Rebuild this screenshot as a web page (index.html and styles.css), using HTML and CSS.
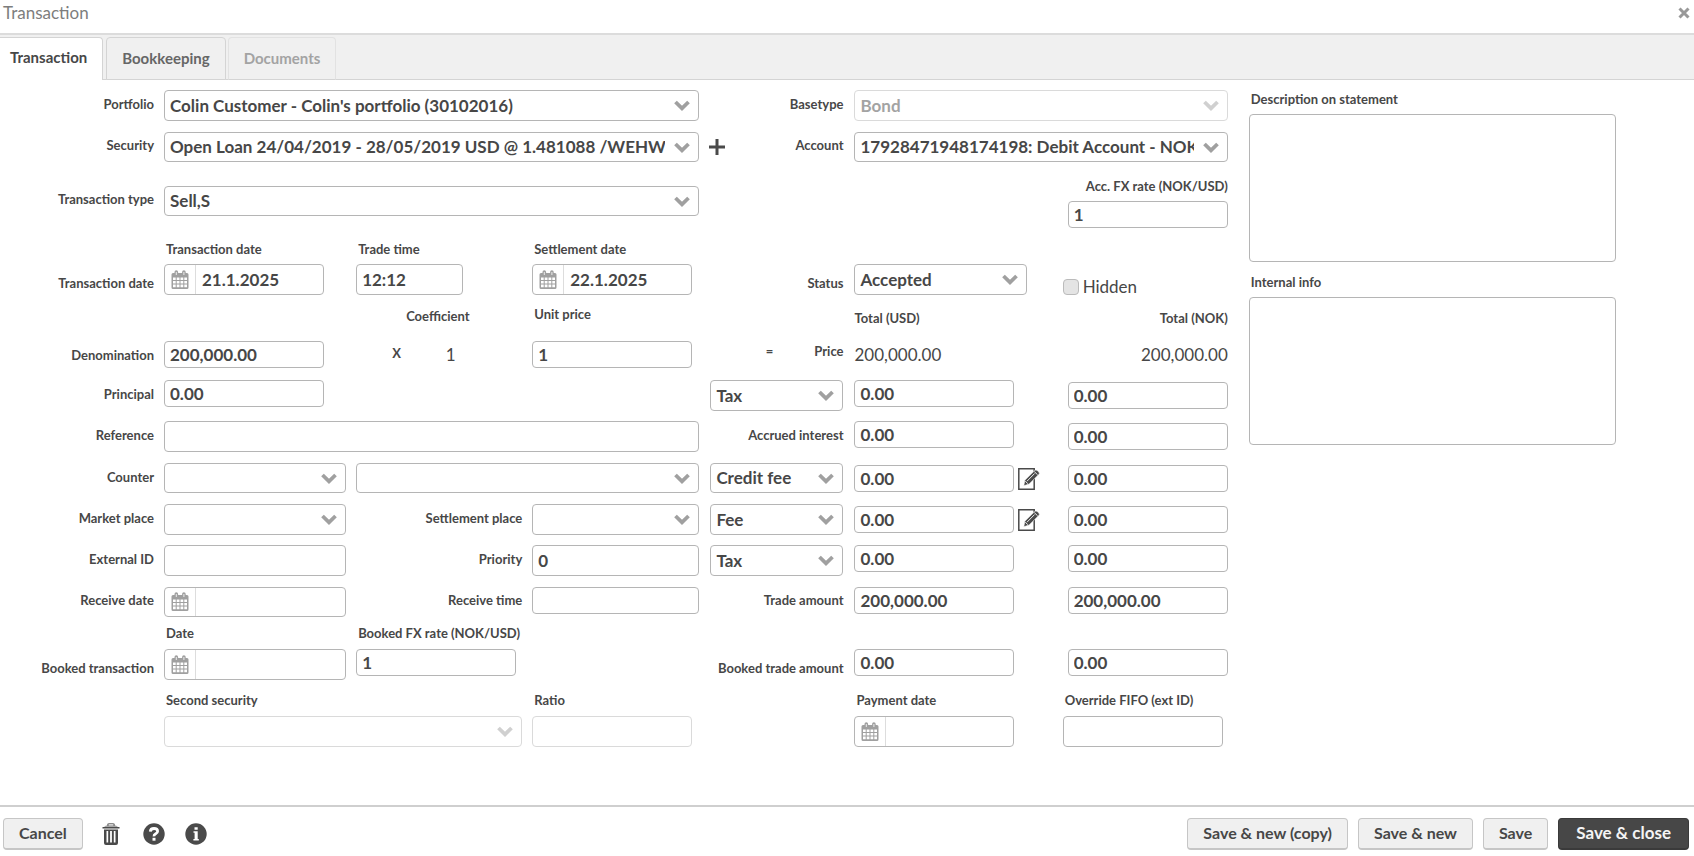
FILE: index.html
```html
<!DOCTYPE html>
<html lang="en">
<head>
<meta charset="utf-8">
<title>Transaction</title>
<link rel="stylesheet" href="styles.css">
</head>
<body>
<svg class="defs" aria-hidden="true">
  <symbol id="i-cal" viewBox="0 0 18 20">
    <path fill="#a0a0a0" fill-rule="evenodd" d="M2 3h1.500v-1a1.800 1.800 0 0 1 3.600 0v1h4v-1a1.800 1.800 0 0 1 3.600 0v1H16a1.500 1.500 0 0 1 1.500 1.500v13A1.500 1.500 0 0 1 16 19H2a1.500 1.500 0 0 1-1.500-1.500v-13A1.500 1.500 0 0 1 2 3zM2 7.500v2.500h2.700V7.500zm3.700 0v2.500h2.800V7.500zm3.800 0v2.500h2.800V7.500zm3.800 0v2.500H16V7.500zM2 11v2.500h2.700V11zm3.700 0v2.500h2.800V11zm3.800 0v2.500h2.800V11zm3.800 0v2.500H16V11zM2 14.500v2.700h2.700v-2.700zm3.700 0v2.700h2.800v-2.700zm3.800 0v2.700h2.800v-2.700zm3.800 0v2.700H16v-2.700z"/>
    <path stroke="#fff" stroke-width=".8" d="M5.300 2v3M12.900 2v3"/>
  </symbol>
  <symbol id="i-edit" viewBox="0 0 22 22">
    <path fill="none" stroke="#4a4a4a" stroke-width="1.500" d="M.8.800h15.400v20.400H.8z"/>
    <path fill="#4a4a4a" stroke="#fff" stroke-width=".6" d="M5.800 17.800l1-5.500L16.700 2.500a1.800 1.800 0 0 1 2.500 0l1.600 1.400a1.800 1.800 0 0 1 0 2.500L11.200 16z"/>
    <path stroke="#fff" stroke-width=".9" d="M9 13.200L16.600 5.500M16.300 3.600l3.300 3.200M7.300 13.300l2.500 2.300"/>
  </symbol>
</svg>

<header class="titlebar">
  <h1>Transaction</h1>
  <button class="close" type="button" aria-label="Close"><svg width="12" height="12" viewBox="0 0 12 12"><path stroke="#999" stroke-width="3" d="M1.500 1.500l9 9M10.500 1.500l-9 9"/></svg></button>
</header>

<nav class="tabs" role="tablist">
  <button class="tab active" type="button" role="tab" aria-selected="true">Transaction</button>
  <button class="tab" type="button" role="tab">Bookkeeping</button>
  <button class="tab" type="button" role="tab" disabled>Documents</button>
</nav>

<main class="body">
  <form class="form" id="tx">
    <label class="lab r1 c1" for="portfolio">Portfolio</label>
    <select class="ctl r1 c2-4" id="portfolio"><option>Colin Customer - Colin's portfolio (30102016)</option></select>
    <label class="lab r1 c5" for="basetype">Basetype</label>
    <select class="ctl r1 c6-7" id="basetype" disabled><option>Bond</option></select>

    <label class="lab high r2 c1" for="security">Security</label>
    <select class="ctl mid r2 c2-4" id="security"><option>Open Loan 24/04/2019 - 28/05/2019 USD @ 1.481088 /WEHW</option></select>
    <div class="addlab r2 c5">
      <button class="icon" type="button" aria-label="Add security"><svg width="16" height="16" viewBox="0 0 16 16"><path stroke="#4a4a4a" stroke-width="3" d="M8 0v16M0 8h16"/></svg></button>
      <label class="lab high" for="account">Account</label>
    </div>
    <select class="ctl mid r2 c6-7" id="account"><option>17928471948174198: Debit Account - NOK</option></select>

    <label class="lab type r3 c1" for="type">Transaction type</label>
    <select class="ctl mid type r3 c2-4" id="type"><option>Sell,S</option></select>
    <div class="stack r3 c7">
      <label class="cap end" for="accfx">Acc. FX rate (NOK/USD)</label>
      <input class="ctl low" id="accfx" value="1">
    </div>

    <label class="cap r4 c2" for="tdate">Transaction date</label>
    <label class="cap r4 c3" for="ttime">Trade time</label>
    <label class="cap r4 c4" for="sdate">Settlement date</label>

    <span class="lab deep r5 c1">Transaction date</span>
    <div class="ctl date std r5 c2"><button class="cal" type="button" aria-label="Pick transaction date"><svg width="18" height="20"><use href="#i-cal"/></svg></button><input id="tdate" value="21.1.2025"></div>
    <input class="ctl time r5 c3" id="ttime" value="12:12">
    <div class="ctl date std r5 c4"><button class="cal" type="button" aria-label="Pick settlement date"><svg width="18" height="20"><use href="#i-cal"/></svg></button><input id="sdate" value="22.1.2025"></div>
    <label class="lab deep r5 c5" for="status">Status</label>
    <select class="ctl status r5 c6" id="status"><option>Accepted</option></select>
    <label class="check r5 c7"><input type="checkbox">Hidden</label>

    <span class="cap coef r6 c3">Coefficient</span>
    <label class="cap r6 c4" for="unit">Unit price</label>
    <span class="cap total r6 c6">Total (USD)</span>
    <span class="cap total end r6 c7">Total (NOK)</span>

    <label class="lab r7 c1" for="denom">Denomination</label>
    <input class="ctl low std r7 c2" id="denom" value="200,000.00">
    <div class="times r7 c3"><span class="sign">X</span><span class="val">1</span></div>
    <input class="ctl low std r7 c4" id="unit" value="1">
    <div class="equals r7 c5"><span class="sign">=</span><span class="sign">Price</span></div>
    <span class="val r7 c6">200,000.00</span>
    <span class="val end r7 c7">200,000.00</span>

    <label class="lab r8 c1" for="principal">Principal</label>
    <input class="ctl low std r8 c2" id="principal" value="0.00">
    <select class="ctl r8 c5" aria-label="First tax type"><option>Tax</option></select>
    <input class="ctl low std r8 c6" aria-label="First tax USD" value="0.00">
    <input class="ctl low drop r8 c7" aria-label="First tax NOK" value="0.00">

    <label class="lab r9 c1" for="ref">Reference</label>
    <input class="ctl r9 c2-4" id="ref">
    <label class="lab r9 c5" for="accrued">Accrued interest</label>
    <input class="ctl low std r9 c6" id="accrued" value="0.00">
    <input class="ctl low drop r9 c7" aria-label="Accrued interest NOK" value="0.00">

    <label class="lab r10 c1" for="counter">Counter</label>
    <select class="ctl mid r10 c2" id="counter"><option></option></select>
    <select class="ctl mid r10 c3-4" aria-label="Counter name"><option></option></select>
    <select class="ctl mid r10 c5" aria-label="Credit fee type"><option>Credit fee</option></select>
    <div class="withicon r10 c6"><input class="ctl low std" aria-label="Credit fee USD" value="0.00"><button class="icon" type="button" aria-label="Edit credit fee"><svg width="22" height="22"><use href="#i-edit"/></svg></button></div>
    <input class="ctl low drop r10 c7" aria-label="Credit fee NOK" value="0.00">

    <label class="lab r11 c1" for="market">Market place</label>
    <select class="ctl r11 c2" id="market"><option></option></select>
    <label class="lab r11 c3" for="splace">Settlement place</label>
    <select class="ctl r11 c4" id="splace"><option></option></select>
    <select class="ctl r11 c5" aria-label="Fee type"><option>Fee</option></select>
    <div class="withicon r11 c6"><input class="ctl low std" aria-label="Fee USD" value="0.00"><button class="icon" type="button" aria-label="Edit fee"><svg width="22" height="22"><use href="#i-edit"/></svg></button></div>
    <input class="ctl low drop r11 c7" aria-label="Fee NOK" value="0.00">

    <label class="lab r12 c1" for="ext">External ID</label>
    <input class="ctl r12 c2" id="ext">
    <label class="lab r12 c3" for="prio">Priority</label>
    <input class="ctl r12 c4" id="prio" value="0">
    <select class="ctl r12 c5" aria-label="Second tax type"><option>Tax</option></select>
    <input class="ctl low std r12 c6" aria-label="Second tax USD" value="0.00">
    <input class="ctl low r12 c7" aria-label="Second tax NOK" value="0.00">

    <label class="lab high r13 c1" for="rdate">Receive date</label>
    <div class="ctl date mid r13 c2"><button class="cal" type="button" aria-label="Pick receive date"><svg width="18" height="20"><use href="#i-cal"/></svg></button><input id="rdate"></div>
    <label class="lab high r13 c3" for="rtime">Receive time</label>
    <input class="ctl low r13 c4" id="rtime">
    <label class="lab high r13 c5" for="trade">Trade amount</label>
    <input class="ctl low std r13 c6" id="trade" value="200,000.00">
    <input class="ctl low r13 c7" aria-label="Trade amount NOK" value="200,000.00">

    <label class="cap r14 c2" for="bdate">Date</label>
    <label class="cap r14 c3" for="bfx">Booked FX rate (NOK/USD)</label>

    <span class="lab deep r15 c1">Booked transaction</span>
    <div class="ctl date r15 c2"><button class="cal" type="button" aria-label="Pick booked date"><svg width="18" height="20"><use href="#i-cal"/></svg></button><input id="bdate"></div>
    <input class="ctl low std r15 c3" id="bfx" value="1">
    <label class="lab deep r15 c5" for="bamount">Booked trade amount</label>
    <input class="ctl low std r15 c6" id="bamount" value="0.00">
    <input class="ctl low r15 c7" aria-label="Booked trade amount NOK" value="0.00">

    <label class="cap r16 c2" for="second">Second security</label>
    <label class="cap r16 c4" for="ratio">Ratio</label>
    <label class="cap r16 c6" for="pdate">Payment date</label>
    <label class="cap out r16 c7" for="fifo">Override FIFO (ext ID)</label>

    <select class="ctl r17 c2-3" id="second" disabled><option></option></select>
    <input class="ctl std r17 c4" id="ratio" disabled>
    <div class="ctl date std r17 c6"><button class="cal" type="button" aria-label="Pick payment date"><svg width="18" height="20"><use href="#i-cal"/></svg></button><input id="pdate"></div>
    <input class="ctl out r17 c7" id="fifo">
  </form>

  <aside class="notes">
    <label class="cap" for="desc">Description on statement</label>
    <textarea id="desc"></textarea>
    <label class="cap" for="info">Internal info</label>
    <textarea id="info"></textarea>
  </aside>
</main>

<footer class="footer">
  <button class="btn" type="button">Cancel</button>
  <div class="tools">
    <button class="icon" type="button" aria-label="Delete"><svg width="24" height="22" viewBox="-3 0 24 22"><path fill="#8a8a8a" d="M2 3.800Q4 2.600 5 2.500V1.500Q5.300 0 7 0h4q1.700 0 2 1.500v1q1 .1 3 1.300z"/><path fill="#fff" d="M6.800 1.400h4.400v1H6.800z"/><path fill="#4a4a4a" fill-rule="evenodd" d="M.5 4h17v1.500H.5zM2 6.500h14V20q0 2-2 2H4q-2 0-2-2zM4.500 8v11.500h1.700V8zm3.600 0v11.500h1.800V8zm3.700 0v11.500h1.700V8z"/></svg></button>
    <button class="icon" type="button" aria-label="Help"><svg width="22" height="22" viewBox="0 0 22 22"><circle cx="11" cy="11" r="10.700" fill="#4a4a4a"/><path fill="none" stroke="#fff" stroke-width="2.800" d="M7.300 8.600Q7.500 5.500 11 5.500T14.600 8.300Q14.600 9.800 12.700 10.800T11 13.400"/><path fill="#fff" d="M9.500 14.800h3v2.900h-3z"/></svg></button>
    <button class="icon" type="button" aria-label="Information"><svg width="22" height="22" viewBox="0 0 22 22"><circle cx="11" cy="11" r="10.700" fill="#4a4a4a"/><path fill="#fff" d="M9.500 4.200h3.200v2.600H9.500zM8.500 8.300h4.200v7.700h1.100v1.500H8.400V16h1.200V9.800H8.500z"/></svg></button>
  </div>
  <div class="saves">
    <button class="btn" type="button">Save &amp; new (copy)</button>
    <button class="btn" type="button">Save &amp; new</button>
    <button class="btn" type="button">Save</button>
    <button class="btn primary" type="submit" form="tx">Save &amp; close</button>
  </div>
</footer>
</body>
</html>
```
FILE: styles.css
```css
* { box-sizing: border-box; }

body {
  margin: 0;
  min-height: 100vh;
  display: flex;
  flex-direction: column;
  background: #fff;
  color: #474747;
  font: 17px/20px Lato, "Open Sans", sans-serif;
}

button, input, select, textarea { font: inherit; color: inherit; margin: 0; }
button { cursor: pointer; }
.defs { display: none; }

.titlebar {
  display: flex;
  justify-content: space-between;
  padding: 3px 4px 10px 3px;
  border-bottom: 2px solid #dcdcdc;
}
.titlebar h1 { margin: 0; font-size: 17px; font-weight: 400; color: #7d7d7d; }
.close, .icon { display: flex; padding: 0; border: 0; background: none; }
.close { align-items: center; }

.tabs {
  display: flex;
  align-items: flex-end;
  background: #f0f0f0;
  padding-top: 2px;
  box-shadow: inset 0 -1px #d4d4d4;
}
.tab {
  padding: 11px 15px 12px;
  margin-right: 2px;
  border: 1px solid #d4d4d4;
  border-radius: 4px 4px 0 0;
  background: #f0f0f0;
  color: #666;
  font-size: 15px;
  line-height: 18px;
  font-weight: 700;
}
.tab:disabled { color: #a3a3a3; border-color: #e2e2e2 #e2e2e2 #d4d4d4; }
.tab.active {
  padding: 10px 15px 14px 10px;
  margin-right: 3px;
  border-width: 1px 1px 0 0;
  border-radius: 0 4px 0 0;
  background: #fff;
  color: #474747;
}

.body {
  flex: 1;
  display: flex;
  align-items: flex-start;
  gap: 21px;
  padding: 10px 78px 24px 0;
}

.form {
  flex: 1227 1 0;
  display: grid;
  column-gap: 10px;
  align-items: start;
  grid-template-columns: 154px
    minmax(0, 182fr) minmax(0, 166fr) minmax(0, 167fr)
    minmax(0, 135fr) minmax(0, 203fr) minmax(0, 160fr);
  grid-template-rows:
    minmax(42px, auto) minmax(46px, auto) minmax(63px, auto)
    minmax(23px, auto) minmax(42px, auto) minmax(35px, auto)
    minmax(39px, auto) minmax(41px, auto) minmax(42px, auto)
    minmax(41px, auto) minmax(41px, auto) minmax(42px, auto)
    minmax(38px, auto) minmax(24px, auto) minmax(43px, auto)
    minmax(24px, auto) auto;
}

.r1 { grid-row: 1; } .r2 { grid-row: 2; } .r3 { grid-row: 3; }
.r4 { grid-row: 4; } .r5 { grid-row: 5; } .r6 { grid-row: 6; }
.r7 { grid-row: 7; } .r8 { grid-row: 8; } .r9 { grid-row: 9; }
.r10 { grid-row: 10; } .r11 { grid-row: 11; } .r12 { grid-row: 12; }
.r13 { grid-row: 13; } .r14 { grid-row: 14; } .r15 { grid-row: 15; }
.r16 { grid-row: 16; } .r17 { grid-row: 17; }

.c1 { grid-column: 1; } .c2 { grid-column: 2; } .c3 { grid-column: 3; }
.c4 { grid-column: 4; } .c5 { grid-column: 5; } .c6 { grid-column: 6; }
.c7 { grid-column: 7; }
.c2-3 { grid-column: 2 / 4; } .c2-4 { grid-column: 2 / 5; }
.c3-4 { grid-column: 3 / 5; } .c6-7 { grid-column: 6 / 8; }

.lab, .cap, .sign {
  font-size: 13px;
  line-height: 16px;
  font-weight: 700;
  white-space: nowrap;
}
.lab { padding-top: 6px; text-align: right; }
.lab.deep { padding-top: 11px; }
.lab.high { padding-top: 5px; }
.lab.type { padding-top: 13px; }
.cap { padding-left: 2px; }
.cap.end { padding-left: 0; text-align: right; }
.cap.total { padding: 4px 0 0; }
.cap.coef { padding: 2px 0 0 50px; }

.ctl {
  width: 100%;
  min-width: 0;
  height: 31px;
  padding: 0 5px;
  border: 1px solid #b5b5b5;
  border-radius: 4px;
  background: #fff;
  font-weight: 700;
}
.ctl.mid { height: 30px; }
.ctl.low { height: 27px; }
.ctl.std { max-width: 160px; }
.ctl.time { max-width: 107px; }
.ctl.status { max-width: 173px; }
.ctl.drop { margin-top: 2px; }
.ctl.type { margin-top: 8px; }
.ctl:disabled { border-color: #dadada; color: #a3a3a3; opacity: 1; }

select.ctl {
  appearance: none;
  padding: 0 33px 0 5px;
  background: #fff url("data:image/svg+xml,%3Csvg xmlns='http://www.w3.org/2000/svg' width='16' height='11'%3E%3Cpath d='M1.500 2L8 8.300L14.500 2' fill='none' stroke='%23a0a0a0' stroke-width='3.800'/%3E%3C/svg%3E") no-repeat right 8px center;
}
select.ctl:disabled {
  background-image: url("data:image/svg+xml,%3Csvg xmlns='http://www.w3.org/2000/svg' width='16' height='11'%3E%3Cpath d='M1.500 2L8 8.300L14.500 2' fill='none' stroke='%23d0d0d0' stroke-width='3.800'/%3E%3C/svg%3E");
}

.ctl.date { display: flex; padding: 0; }
.date .cal {
  display: flex;
  align-items: center;
  padding: 0 6px;
  border: 0;
  border-right: 1px solid #ddd;
  background: none;
}
.date input {
  flex: 1;
  min-width: 0;
  padding: 0 6px;
  border: 0;
  background: none;
  font-weight: 700;
}

.c5 { padding-right: 1px; }
select.ctl.c5 { width: auto; margin-right: 1px; margin-left: 1px; }
.addlab { display: flex; justify-content: space-between; }
.addlab .icon { padding-top: 7px; }
.stack { display: grid; gap: 7px; }
.out { margin: 0 5px 0 -5px; }
.ctl.out { width: auto; }

.check { display: flex; align-items: center; gap: 4px; padding-top: 13px; margin-left: -5px; }
.check input {
  appearance: none;
  width: 16px;
  height: 16px;
  border: 1px solid #bbb;
  border-radius: 4px;
  background: #e4e4e4;
}

.sign { padding-top: 2px; }
.times { display: flex; }
.times .sign { padding: 4px 0 0 36px; }
.times .val { padding-left: 45px; }
.equals { display: flex; justify-content: flex-end; gap: 41px; }
.val { padding-top: 4px; }
.val.end { text-align: right; }
.withicon { display: flex; align-items: center; gap: 4px; padding-top: 2px; }
.withicon .ctl { flex: 0 1 160px; }

.notes { flex: 367 1 0; display: flex; flex-direction: column; padding-top: 1px; }
.notes textarea {
  height: 148px;
  margin: 7px 0 12px;
  padding: 6px;
  border: 1px solid #b5b5b5;
  border-radius: 4px;
  resize: none;
}

.footer {
  display: flex;
  align-items: center;
  padding: 11px 5px 6px 3px;
  border-top: 2px solid #cfcfcf;
}
.tools { display: flex; align-items: center; gap: 20px; margin-left: 16px; }
.saves { display: flex; gap: 10px; margin-left: auto; }
.btn {
  padding: 4px 15px 5px;
  border: 1px solid #c6c6c6;
  border-bottom-width: 2px;
  border-radius: 4px;
  background: #f0f0f0;
  font-size: 16px;
  font-weight: 700;
}
.btn.primary {
  padding: 4px 17px 5px;
  background: #474747;
  border-color: #3a3a3a;
  color: #f4f4f4;
  font-size: 17px;
}
```
